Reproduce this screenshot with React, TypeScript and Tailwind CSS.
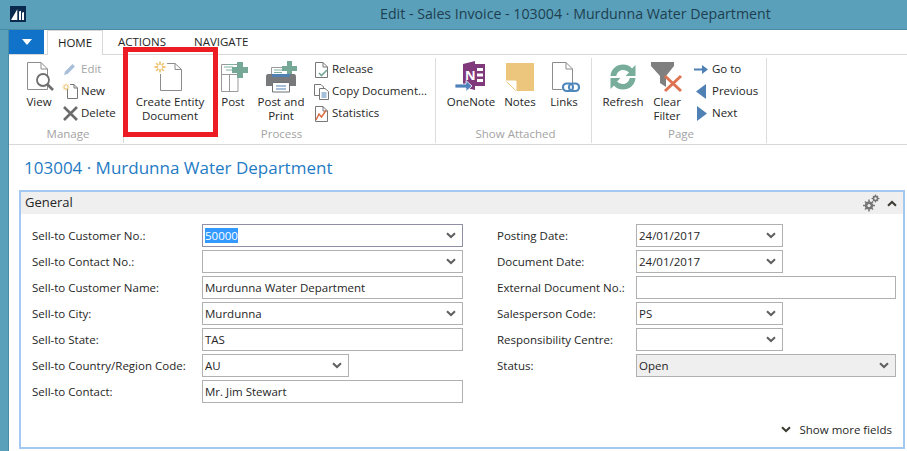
import type { ReactNode } from 'react'

function Chevron({ dark }: { dark?: boolean }) {
  return (
    <svg width="10" height="7" viewBox="0 0 10 7" className="shrink-0">
      <path d="M1 1.2 5 5 9 1.2" fill="none" stroke={dark ? '#3c3c32' : '#5f5f5f'} strokeWidth="2" />
    </svg>
  )
}

function Logo() {
  return (
    <svg width="16" height="16" viewBox="0 0 16 16">
      <rect width="16" height="16" fill="#0b2a4e" />
      <path d="M1 14 7.3 3.3V14ZM9 14V5.5L11 4.8V14ZM12 14V6.7L14 6V14Z" fill="#fff" />
    </svg>
  )
}

function Spark({ x, y, r }: { x: number; y: number; r: number }) {
  const d = r * 0.7
  return (
    <g stroke="#f0c67a" strokeWidth={r * 0.32} fill="none">
      <path d={`M${x - r} ${y}H${x + r}M${x} ${y - r}V${y + r}M${x - d} ${y - d}L${x + d} ${y + d}M${x - d} ${y + d}L${x + d} ${y - d}`} />
      <circle cx={x} cy={y} r={r * 0.4} fill="#fff" stroke="none" />
    </g>
  )
}

function ViewIcon() {
  return (
    <svg width="36" height="32" viewBox="0 0 36 32">
      <path d="M1.5 1.5H15L21.5 8V28.5H1.5Z M15 1.5V8H21.5" transform="translate(5 0)" fill="#fff" stroke="#8c8c8c" />
      <circle cx="22" cy="19" r="6" fill="#fff" stroke="#6e6e6e" strokeWidth="1.8" />
      <path d="M26.5 23.5 32 29" stroke="#6e6e6e" strokeWidth="2.6" />
    </svg>
  )
}

function CreateDocIcon() {
  return (
    <svg width="36" height="32" viewBox="0 0 36 32">
      <path d="M8.5 6.5V29.5H29.5V8.5L23 2.5H13M23 2.5V8.5H29.5" fill="#fff" stroke="#8c8c8c" />
      <rect x="2" y="0" width="13" height="13" fill="#fff" />
      <Spark x={8} y={6} r={5.5} />
    </svg>
  )
}

function PostIcon() {
  return (
    <svg width="32" height="32" viewBox="0 0 32 32">
      <path d="M4.5 3.5H21V30.5H4.5Z M4.5 13.5H21M12.5 13.5V30.5" fill="#fff" stroke="#9a9a9a" />
      <path d="M7 6H16M9 9H16M10 3.5H17" stroke="#7fb0a0" strokeWidth="1" />
      <path d="M20 1H26V6H31V12H26V17H20V12H15V6H20Z" fill="#76a898" />
    </svg>
  )
}

function PrintIcon() {
  return (
    <svg width="36" height="32" viewBox="0 0 36 32">
      <path d="M8.5 6.5H25V14H8.5Z" fill="#fff" stroke="#9a9a9a" />
      <path d="M11 9H19M11 11.5H19" stroke="#7fb0a0" />
      <path d="M24 0H29V5H34V10H29V15H24V10H19V5H24Z" fill="#76a898" />
      <path d="M3 16C3 13.5 4 13 6 13H30C32 13 33 13.5 33 16V25H27V22H9V25H3Z" fill="#77797a" />
      <rect x="9" y="13" width="18" height="3" fill="#4f81b5" />
      <path d="M9.5 21.5H26.5V31H9.5Z" fill="#fff" stroke="#6e7072" />
      <path d="M13 25H23M13 28H23" stroke="#4f81b5" />
    </svg>
  )
}

function OneNoteIcon() {
  return (
    <svg width="36" height="32" viewBox="0 0 36 32">
      <path d="M10 3 22 0V29L10 26Z" fill="#80397b" />
      <rect x="22" y="3" width="10" height="22" fill="#80397b" />
      <path d="M24 7H30V10H24ZM24 12.5H30V15.5H24ZM24 18H30V21H24Z" fill="#fff" />
      <text x="12" y="19" fontSize="13" fontWeight="700" fill="#fff" fontFamily="'Open Sans',sans-serif">N</text>
      <path d="M2 23H13V19.5L19 25 13 30.5V27H2Z" fill="#4f81bd" stroke="#fff" strokeWidth="0.8" />
    </svg>
  )
}

function NotesIcon() {
  return (
    <svg width="30" height="30" viewBox="0 0 30 30">
      <path d="M1 1H29V29H11L1 19Z" fill="#ecc67c" />
      <path d="M1 19H11V29Z" fill="#fff" />
      <path d="M1 19H11V29" fill="none" stroke="#fff" />
      <path d="M1.5 19.5 10.5 28.5" stroke="#ecc67c" strokeWidth="1" />
    </svg>
  )
}

function LinksIcon() {
  return (
    <svg width="32" height="32" viewBox="0 0 32 32">
      <path d="M4.5 1.5H18L24.5 8V26M15 28.5H4.5V1.5M18 1.5V8H24.5" fill="#fff" stroke="#8c8c8c" />
      <rect x="14" y="22" width="18" height="9" rx="4.5" fill="#fff" />
      <rect x="15" y="22.5" width="10" height="7.5" rx="3.7" fill="none" stroke="#4d87bb" strokeWidth="2.2" />
      <rect x="21" y="22.5" width="10" height="7.5" rx="3.7" fill="none" stroke="#4d87bb" strokeWidth="2.2" />
    </svg>
  )
}

function RefreshIcon() {
  return (
    <svg width="32" height="32" viewBox="0 0 32 32">
      <path d="M3.5 15C4 8 9.5 3.5 16 3.5C20 3.5 23 5 25 7.5L28.5 4V15H18.5L22 11.5C20.5 10 18.5 9 16 9C12.5 9 10 11.5 9.3 15Z" fill="#78ad9c" />
      <path d="M28.5 17C28 24 22.5 28.5 16 28.5C12 28.5 9 27 7 24.5L3.5 28V17H13.5L10 20.5C11.5 22 13.5 23 16 23C19.5 23 22 20.5 22.7 17Z" fill="#78ad9c" />
    </svg>
  )
}

function ClearFilterIcon() {
  return (
    <svg width="34" height="32" viewBox="0 0 34 32">
      <path d="M1 1H24V5L16 15V26L10 22V15L1 5Z" fill="#7f7f7f" />
      <path d="M15 15 31 30M31 15 15 30" stroke="#dd7350" strokeWidth="3" />
    </svg>
  )
}

function GearsIcon() {
  return (
    <svg width="17" height="18" viewBox="0 0 17 18">
      <g fill="none" stroke="#757575">
        <circle cx="6" cy="11.5" r="3" strokeWidth="2.2" />
        <path d="M6 5.5V17.5M0 11.5H12M2 7.5 10 15.5M10 7.5 2 15.5" strokeWidth="1.5" />
        <circle cx="12.5" cy="4.5" r="2.2" strokeWidth="1.4" />
        <path d="M12.5 0.5V8.5M8.5 4.5H16.5M10 2 15 7M15 2 10 7" strokeWidth="1.1" />
      </g>
      <circle cx="6" cy="11.5" r="1.6" fill="#efefef" />
      <circle cx="12.5" cy="4.5" r="1.2" fill="#efefef" />
    </svg>
  )
}

const smallIcons: Record<string, ReactNode> = {
  edit: <path d="M2 14 3 10.5 10.5 3 13 5.5 5.5 13Z" fill="#a9c0d8" />,
  new: (
    <>
      <path d="M5.5 5V15.5H15.5V5L12 1.5H8M12 1.5V5H15.5" fill="#fff" stroke="#777" />
      <Spark x={4} y={4} r={3.5} />
    </>
  ),
  delete: <path d="M2 2 15 15M15 2 2 15" stroke="#6b6b6b" strokeWidth="2.6" />,
  release: (
    <>
      <path d="M2.5 1.5H10L14.5 6V16.5H2.5ZM10 1.5V6H14.5" fill="#fff" stroke="#777" />
      <path d="M6 12 8.5 14.5 14 9" fill="none" stroke="#76a898" strokeWidth="1.6" />
    </>
  ),
  copy: (
    <>
      <path d="M1.5 1.5H8L10.5 4V12.5H1.5Z" fill="#fff" stroke="#777" />
      <path d="M6.5 5.5H12L15.5 8.5V16.5H6.5Z" fill="#fff" stroke="#777" />
      <path d="M8.5 10H13.5M8.5 12H13.5M8.5 14H13.5" stroke="#4f81b5" />
    </>
  ),
  stats: (
    <>
      <path d="M2.5 1.5H10L14.5 6V16.5H2.5ZM10 1.5V6H14.5" fill="#fff" stroke="#777" />
      <path d="M3 15 6 9 8.5 12 13 5.5" fill="none" stroke="#d9693f" strokeWidth="1.4" />
    </>
  ),
  goto: <path d="M1 7.5H9V4L15 8.5 9 13V9.5H1Z" fill="#4f81b5" />,
  prev: <path d="M13 1V16L3 8.5Z" fill="#4f81b5" />,
  next: <path d="M4 1V16L14 8.5Z" fill="#4f81b5" />,
}

function LargeBtn({ icon, lines, w }: { icon: ReactNode; lines: string[]; w: string }) {
  return (
    <div className={`${w} flex flex-col items-center shrink-0`}>
      <div className="h-[37px] flex items-center justify-center">{icon}</div>
      <div className="text-center leading-[14px]">
        {lines.map((l) => (
          <div key={l} className="whitespace-nowrap">{l}</div>
        ))}
      </div>
    </div>
  )
}

function SmallCol({ items, w }: { items: { icon: string; label: string; off?: boolean }[]; w: string }) {
  return (
    <div className={`${w} flex flex-col shrink-0`}>
      {items.map((it) => (
        <div key={it.label} className={`h-[22px] flex items-center gap-[2px] whitespace-nowrap ${it.off ? 'text-[#a6a6a6]' : ''}`}>
          <svg width="17" height="17" viewBox="0 0 17 17" className="shrink-0">{smallIcons[it.icon]}</svg>
          {it.label}
        </div>
      ))}
    </div>
  )
}

function Group({ label, w, children, pl }: { label: string; w: string; children: ReactNode; pl: string }) {
  return (
    <div className={`${w} shrink-0 h-[85px] border-r border-[#dcdcdc] flex flex-col`}>
      <div className={`h-[68px] flex ${pl}`}>{children}</div>
      <div className="pl-[4px] text-center text-[#a3a3a3] leading-[16px]">{label}</div>
    </div>
  )
}

function Field({ value, select, w = 'w-full', selected, gray }: { value?: string; select?: boolean; w?: string; selected?: boolean; gray?: boolean }) {
  return (
    <div className={`${w} h-[23px] border flex items-center pl-[2px] pr-[6px] ${selected ? 'border-[#8f8fa8]' : 'border-[#b0b0b0]'} ${gray ? 'bg-[#efefef]' : 'bg-white'}`}>
      <span className="flex-1 whitespace-nowrap leading-[15px]">
        {selected ? <span className="bg-[#3399ff] text-white">{value}</span> : value}
      </span>
      {select && <Chevron />}
    </div>
  )
}

const leftRows = [
  { label: 'Sell-to Customer No.:', value: '50000', select: true, selected: true },
  { label: 'Sell-to Contact No.:', value: '', select: true },
  { label: 'Sell-to Customer Name:', value: 'Murdunna Water Department' },
  { label: 'Sell-to City:', value: 'Murdunna', select: true },
  { label: 'Sell-to State:', value: 'TAS' },
  { label: 'Sell-to Country/Region Code:', value: 'AU', select: true, w: 'w-[147px]' },
  { label: 'Sell-to Contact:', value: 'Mr. Jim Stewart' },
]

const rightRows = [
  { label: 'Posting Date:', value: '24/01/2017', select: true, w: 'w-[147px]' },
  { label: 'Document Date:', value: '24/01/2017', select: true, w: 'w-[147px]' },
  { label: 'External Document No.:', value: '' },
  { label: 'Salesperson Code:', value: 'PS', select: true, w: 'w-[147px]' },
  { label: 'Responsibility Centre:', value: '', select: true, w: 'w-[147px]' },
  { label: 'Status:', value: 'Open', select: true, gray: true },
]

export default function App() {
  return (
    <div className="w-[907px] h-[451px] overflow-hidden bg-[#5ba0ba] font-['Open_Sans','Noto_Sans',sans-serif] text-[11.5px] text-[#262626] flex flex-col">
      {/* window title */}
      <div className="h-[30px] shrink-0 flex items-center pl-[10px] pb-[2px] border-b border-[#4a8ba3]">
        <Logo />
        <div className="ml-[354px] text-[14.2px] text-[#1d3f50] whitespace-nowrap">Edit - Sales Invoice - 103004 · Murdunna Water Department</div>
      </div>

      <div className="flex-1 ml-[8px] bg-white border-l border-[#4a8ba3] flex flex-col relative">
        {/* tabs */}
        <div className="h-[25px] shrink-0 flex border-b border-[#d8d8d8]">
          <div className="w-[35px] h-[24px] bg-[#1072c8] flex items-center justify-center">
            <svg width="10" height="6" viewBox="0 0 10 6"><path d="M0 0H10L5 6Z" fill="#fff" /></svg>
          </div>
          <div className="ml-[3px] w-[56px] h-[25px] bg-white border border-b-0 border-[#d8d8d8] flex items-center justify-center text-[#1a1a1a]">HOME</div>
          <div className="ml-[15px] h-[24px] flex items-center">ACTIONS</div>
          <div className="ml-[28px] h-[24px] flex items-center">NAVIGATE</div>
        </div>

        {/* ribbon */}
        <div className="h-[90px] shrink-0 flex border-b border-[#d8d8d8] pt-[3px]">
          <Group label="Manage" w="w-[115px]" pl="pl-[11px]">
            <LargeBtn w="w-[38px]" icon={<ViewIcon />} lines={['View']} />
            <div className="ml-[4px]">
              <SmallCol
                w="w-[60px]"
                items={[
                  { icon: 'edit', label: 'Edit', off: true },
                  { icon: 'new', label: 'New' },
                  { icon: 'delete', label: 'Delete' },
                ]}
              />
            </div>
          </Group>
          <Group label="Process" w="w-[312px]" pl="pl-0">
            <LargeBtn w="w-[92px]" icon={<CreateDocIcon />} lines={['Create Entity', 'Document']} />
            <LargeBtn w="w-[34px]" icon={<PostIcon />} lines={['Post']} />
            <LargeBtn w="w-[62px]" icon={<PrintIcon />} lines={['Post and', 'Print']} />
            <div className="ml-[1px]">
              <SmallCol
                w="w-[118px]"
                items={[
                  { icon: 'release', label: 'Release' },
                  { icon: 'copy', label: 'Copy Document...' },
                  { icon: 'stats', label: 'Statistics' },
                ]}
              />
            </div>
          </Group>
          <Group label="Show Attached" w="w-[156px]" pl="pl-[9px]">
            <LargeBtn w="w-[52px]" icon={<OneNoteIcon />} lines={['OneNote']} />
            <LargeBtn w="w-[46px]" icon={<NotesIcon />} lines={['Notes']} />
            <LargeBtn w="w-[42px]" icon={<LinksIcon />} lines={['Links']} />
          </Group>
          <Group label="Page" w="w-[175px]" pl="pl-[8px]">
            <LargeBtn w="w-[46px]" icon={<RefreshIcon />} lines={['Refresh']} />
            <LargeBtn w="w-[42px]" icon={<ClearFilterIcon />} lines={['Clear', 'Filter']} />
            <div className="ml-[5px]">
              <SmallCol
                w="w-[70px]"
                items={[
                  { icon: 'goto', label: 'Go to' },
                  { icon: 'prev', label: 'Previous' },
                  { icon: 'next', label: 'Next' },
                ]}
              />
            </div>
          </Group>
        </div>

        {/* red highlight drawn over the ribbon */}
        <div className="absolute left-[114px] top-[17px] w-[95px] h-[90px] border-[5px] border-[#ed1c24]" />

        {/* page title */}
        <div className="h-[45px] shrink-0 flex items-center pl-[15px] text-[17px] text-[#1f7bc4] whitespace-nowrap">103004 · Murdunna Water Department</div>

        {/* General panel */}
        <div className="ml-[10px] mr-[2px] h-[259px] border-2 border-[#a3c9f2] flex flex-col">
          <div className="h-[22px] shrink-0 bg-[#efefef] flex items-center pl-[4px] pr-[6px]">
            <span className="flex-1 text-[13px]">General</span>
            <GearsIcon />
            <svg width="10" height="7" viewBox="0 0 10 7" className="ml-[7px]">
              <path d="M1 5.8 5 2 9 5.8" fill="none" stroke="#3c3c32" strokeWidth="2" />
            </svg>
          </div>

          <div className="flex pt-[10px] pl-[11px]">
            <div className="w-[431px] shrink-0 flex flex-col gap-[3px]">
              {leftRows.map((r) => (
                <div key={r.label} className="flex items-center">
                  <div className="w-[170px] shrink-0 whitespace-nowrap">{r.label}</div>
                  <div className="w-[261px]">
                    <Field value={r.value} select={r.select} selected={r.selected} w={r.w} />
                  </div>
                </div>
              ))}
            </div>
            <div className="ml-[34px] w-[399px] shrink-0 flex flex-col gap-[3px]">
              {rightRows.map((r) => (
                <div key={r.label} className="flex items-center">
                  <div className="w-[139px] shrink-0 whitespace-nowrap">{r.label}</div>
                  <div className="w-[260px]">
                    <Field value={r.value} select={r.select} w={r.w} gray={r.gray} />
                  </div>
                </div>
              ))}
            </div>
          </div>

          <div className="mt-[18px] mr-[11px] flex items-center justify-end gap-[8px]">
            <Chevron dark />
            <span className="whitespace-nowrap">Show more fields</span>
          </div>
        </div>
      </div>
    </div>
  )
}
